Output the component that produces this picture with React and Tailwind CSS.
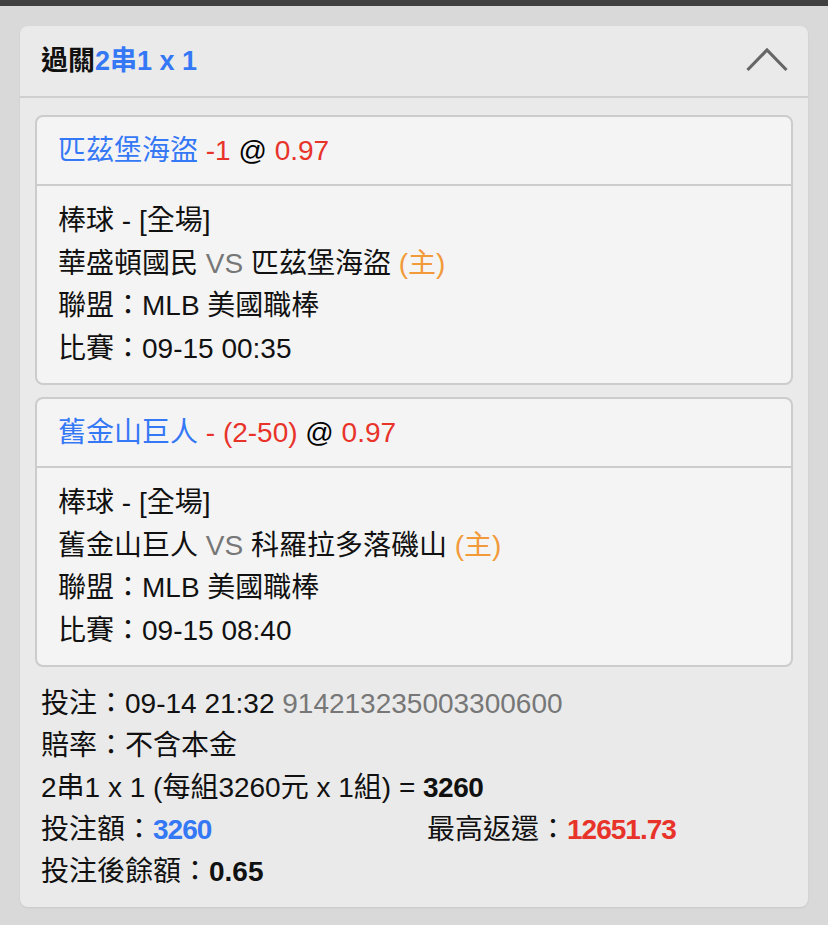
import React from "react";

const font = { fontFamily: '"Liberation Sans", "Noto Sans CJK TC", sans-serif' };

function Box({ team, handicap, odds, lines }) {
  return (
    <div className="rounded-[8px] border-2 border-[#cccccc] bg-[#f4f4f4]">
      <div className="flex h-[67px] items-center px-[21px] text-[28px] leading-[42px]">
        <span className="text-[#3478f6]">{team}</span>
        <span className="text-[#e8332a]">&nbsp;{handicap}</span>
        <span className="text-black">&nbsp;@&nbsp;</span>
        <span className="text-[#e8332a]">{odds}</span>
      </div>
      <div className="border-t-2 border-[#cccccc] px-[21px] pb-[13px] pt-[14px] text-[28px] leading-[42.5px] text-[#111]">
        {lines}
      </div>
    </div>
  );
}

export default function App() {
  return (
    <div className="min-h-[925px] bg-[#d9d9d9]" style={font}>
      <div className="h-[6px] bg-[#404040]" />
      <div className="mx-[20px] mt-[20px] rounded-[8px] bg-[#eaeaea] shadow-[0_1px_2px_rgba(0,0,0,0.08)]">
        <div className="flex h-[72px] items-center justify-between border-b-2 border-[#cfcfcf] pl-[21px] pr-[20px]">
          <div className="text-[27px] font-bold leading-[40px]">
            <span className="text-[#111]">過關</span>
            <span className="text-[#3478f6]">2串1 x 1</span>
          </div>
          <svg width="42" height="26" viewBox="0 0 42 26" className="mt-[-2px]">
            <polyline points="1.5,23 21,3 40.5,23" fill="none" stroke="#666" strokeWidth="3.2" />
          </svg>
        </div>
        <div className="flex flex-col gap-[12px] px-[15px] pt-[17px]">
          <Box
            team="匹茲堡海盜"
            handicap="-1"
            odds="0.97"
            lines={
              <>
                <div>棒球 - [全場]</div>
                <div>
                  華盛頓國民 <span className="text-[#777]">VS</span> 匹茲堡海盜{" "}
                  <span className="text-[#f29a3a]">(主)</span>
                </div>
                <div>聯盟：MLB 美國職棒</div>
                <div>比賽：09-15 00:35</div>
              </>
            }
          />
          <Box
            team="舊金山巨人"
            handicap="- (2-50)"
            odds="0.97"
            lines={
              <>
                <div>棒球 - [全場]</div>
                <div>
                  舊金山巨人 <span className="text-[#777]">VS</span> 科羅拉多落磯山{" "}
                  <span className="text-[#f29a3a]">(主)</span>
                </div>
                <div>聯盟：MLB 美國職棒</div>
                <div>比賽：09-15 08:40</div>
              </>
            }
          />
        </div>
        <div className="px-[21px] pb-[14px] pt-[16px] text-[28px] leading-[42px] text-[#111]">
          <div>
            投注：09-14 21:32 <span className="text-[#777]">914213235003300600</span>
          </div>
          <div>賠率：不含本金</div>
          <div>
            2串1 x 1 (每組3260元 x 1組) = <span className="font-bold tracking-[-0.5px]">3260</span>
          </div>
          <div className="flex">
            <div className="w-[386px]">
              投注額：<span className="font-bold tracking-[-1px] text-[#3478f6]">3260</span>
            </div>
            <div>
              最高返還：<span className="font-bold tracking-[-1px] text-[#e8332a]">12651.73</span>
            </div>
          </div>
          <div>
            投注後餘額：<span className="font-bold">0.65</span>
          </div>
        </div>
      </div>
    </div>
  );
}
